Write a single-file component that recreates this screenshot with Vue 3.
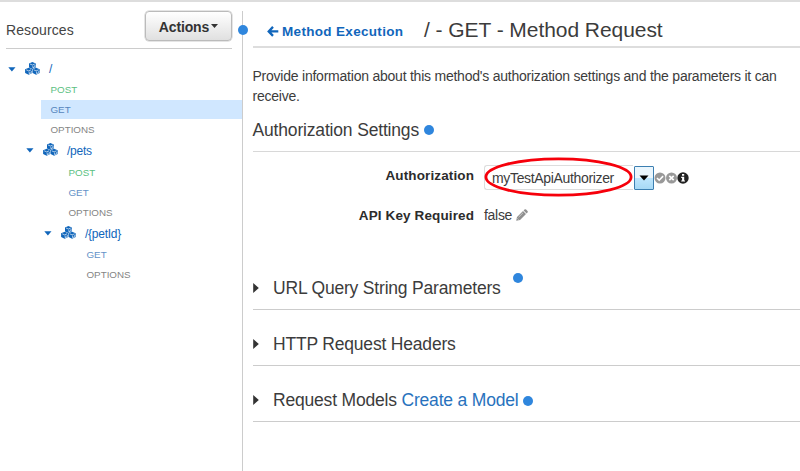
<script setup>
const tree = [
  { label: '/', depth: 0, height: 20, methods: ['POST', 'GET', 'OPTIONS'], selected: 'GET' },
  { label: '/pets', depth: 1, height: 23, methods: ['POST', 'GET', 'OPTIONS'] },
  { label: '/{petId}', depth: 2, height: 22, methods: ['GET', 'OPTIONS'] },
]
const sections = [
  { title: 'URL Query String Parameters', dot: 'raised' },
  { title: 'HTTP Request Headers' },
  { title: 'Request Models', link: 'Create a Model', dot: 'inline' },
]
</script>

<template>
  <div class="page">
    <aside class="sidebar">
      <header class="side-head">
        <span class="side-title">Resources</span>
        <button class="actions"><span>Actions</span><svg width="7" height="4" viewBox="0 0 7 4"><path d="M0 0h7L3.5 4z" fill="#333" /></svg></button>
      </header>
      <div v-for="node in tree" :key="node.label" class="node" :class="'depth' + node.depth">
        <div class="resource" :style="{ height: node.height + 'px' }">
          <svg class="caret" width="8" height="5" viewBox="0 0 8 5"><path d="M.3 .3h7.2L3.9 4.6z" fill="currentColor" /></svg>
          <svg class="cubes" width="15" height="13" viewBox="0 0 15 13">
            <g fill="currentColor">
              <path d="M7.4 0l3.4 1.4v4L7.4 6.9 4 5.4v-4z" />
              <path d="M3.7 5.7l3.5 1.5v3.8l-3.5 1.7L.1 11V7.2z" />
              <path d="M11.1 5.7l3.6 1.5V11l-3.6 1.7L7.6 11V7.2z" />
            </g>
            <g fill="none" stroke="#fff" stroke-width=".65">
              <path d="M5 2l2.4 1 2.4-1M7.9 3.8v2l2-.9V3.1" />
              <path d="M1.2 7.8l2.5 1.1 2.4-1.1M4.2 9.6v2.1l2.1-1V8.9" />
              <path d="M8.7 7.8l2.4 1.1 2.5-1.1M11.6 9.6v2.1l2.2-1V8.9" />
            </g>
          </svg>
          <span class="path">{{ node.label }}</span>
        </div>
        <div v-for="m in node.methods" :key="m" class="method" :class="[m.toLowerCase(), { selected: m === node.selected }]">
          <span>{{ m }}</span>
        </div>
      </div>
    </aside>

    <main class="content">
      <i class="dot divider-dot"></i>
      <header class="main-head">
        <a class="back">
          <svg width="12" height="11" viewBox="0 0 12 11"><path d="M6 .9L1.7 5.4 6 9.9M2 5.4h9.3" fill="none" stroke="currentColor" stroke-width="2.3" /></svg>
          <span>Method Execution</span>
        </a>
        <h1>/ - GET - Method Request</h1>
      </header>
      <p class="intro">Provide information about this method's authorization settings and the parameters it can<br>receive.</p>
      <h2 class="auth-title"><span>Authorization Settings</span><i class="dot"></i></h2>

      <div class="form-row auth-row">
        <label>Authorization</label>
        <div class="select">
          <span class="value">myTestApiAuthorizer</span>
          <svg class="ring" width="150" height="42" viewBox="0 0 150 42"><ellipse cx="74.5" cy="21" rx="72.6" ry="18.2" fill="none" stroke="#f6000b" stroke-width="2.8" /></svg>
        </div>
        <button class="drop"><svg width="10" height="6" viewBox="0 0 10 6"><path d="M.5 .5h9L5 5.5z" fill="#000" /></svg></button>
        <svg class="status" width="36" height="12" viewBox="0 0 36 12">
          <circle cx="6" cy="6" r="5.5" fill="#999" />
          <path d="M3 6l2.2 2.2L9.1 4.1" fill="none" stroke="#fff" stroke-width="1.6" />
          <circle cx="17.5" cy="6" r="5.5" fill="#999" />
          <path d="M15.3 3.8l4.4 4.4M19.7 3.8l-4.4 4.4" stroke="#fff" stroke-width="1.7" />
          <circle cx="29" cy="6" r="5.7" fill="#222" />
          <path d="M28 2h2.2v1.7H28zM27.2 4.8h3v3.6h.8v1.2h-3.8V8.4h.9V6h-.9z" fill="#fff" />
        </svg>
      </div>
      <div class="form-row key-row">
        <label>API Key Required</label>
        <span class="false">false</span>
        <svg class="pencil" width="12" height="12" viewBox="0 0 12 12">
          <path d="M.2 11.8l.8-3.8L7 2l3 3-6 6zM7.6 1.4L8.5.5q.8-.7 1.6 0l1.4 1.4q.7.8 0 1.6l-.9.9z" fill="#8f8f8f" />
          <path d="M2.6 8.2L7 3.8M1.4 9.4l1.2 1.2" stroke="#fff" stroke-width=".5" />
        </svg>
      </div>

      <section v-for="s in sections" :key="s.title" class="fold">
        <svg class="tri" width="6" height="10" viewBox="0 0 6 10"><path d="M.2 0v10L5.8 5z" fill="#333" /></svg>
        <h2>{{ s.title }} <a v-if="s.link">{{ s.link }}</a></h2>
        <i v-if="s.dot" class="dot" :class="s.dot"></i>
      </section>
    </main>
  </div>
</template>

<style>
body { margin: 0; background: #fff; }
</style>

<style scoped>
* { box-sizing: border-box; }
.page {
  display: flex; width: 800px; height: 471px; overflow: hidden;
  border-top: 2px solid #ddd; background: #fff; color: #3c3c3c;
  font-family: "Liberation Sans", Arial, sans-serif; font-size: 14px;
}
svg { display: block; flex: none; }
h1, h2, p { margin: 0; font-weight: 400; }
button { font-family: inherit; padding: 0; }
.sidebar { width: 242px; flex: none; }
.side-head {
  display: flex; align-items: flex-start; justify-content: space-between;
  height: 47px; margin: 0 10px 10px 6px; padding-top: 9px; border-bottom: 1px solid #ccc;
}
.side-title { line-height: 20px; padding-top: 9px; letter-spacing: .1px; color: #444; }
.actions {
  display: flex; align-items: center; justify-content: center; gap: 2px;
  width: 87px; height: 30px; border: 1px solid #bbb; border-radius: 4px;
  background: linear-gradient(#fff, #e0e0e0); box-shadow: 0 0 0 .5px #ccc;
  color: #333; font-size: 14px; font-weight: 700; letter-spacing: -.15px;
}
.actions span { margin-top: 1px; }
.depth0 { padding-left: 8px; }
.depth1 { padding-left: 26px; }
.depth2 { padding-left: 44px; }
.resource { display: flex; align-items: center; color: #1166bb; font-size: 12px; }
.caret { margin-right: 9px; }
.cubes { margin: -2px 9px 0 0; }
.path { line-height: 16px; letter-spacing: -.25px; }
.depth2 .path { margin-top: 1px; }
.method {
  height: 20px; margin-left: 33px; padding: 1px 0 0 9.5px; line-height: 19px;
  font-size: 9.8px; color: #858585;
}
.post { color: #5cbf82; }
.get { color: #6492c8; }
.method.selected { background: linear-gradient(transparent 1px, #d0e7ff 1px); color: #5585bd; }

.content {
  position: relative; flex: 1; margin-top: 9px; padding-left: 9.5px; border-left: 1px solid #ccc;
}
.dot { display: block; flex: none; width: 10px; height: 10px; border-radius: 50%; background: #2f86dd; }
.divider-dot { position: absolute; left: -5px; top: 14px; }
.main-head {
  display: flex; height: 37px; padding-left: 14.5px; border-bottom: 2px solid #ddd;
}
.back {
  display: flex; align-items: center; gap: 3px; width: 157px; height: 40px;
  color: #1166bb; font-size: 13.5px; font-weight: 700; letter-spacing: .32px; white-space: nowrap;
}
h1 { font-size: 21px; line-height: 24px; padding-top: 7px; letter-spacing: -.06px; white-space: nowrap; }
.intro { padding-top: 18px; line-height: 20px; letter-spacing: -.23px; white-space: nowrap; }
.auth-title {
  display: flex; align-items: center; gap: 4.5px; height: 46px; padding-top: 3px;
  border-bottom: 1px solid #d8d8d8; font-size: 17.5px; letter-spacing: -.17px;
}
.form-row { display: flex; }
.form-row label {
  width: 221.5px; padding-top: 1px; text-align: right; font-size: 13.5px; font-weight: 700;
  line-height: 20px; letter-spacing: .12px; color: #2c2c2c; white-space: nowrap;
}
.auth-row { padding-top: 13px; height: 53px; }
.select {
  position: relative; width: 149px; height: 25px; margin-left: 10px; padding-left: 7px;
  border: 1px solid #ddd; border-right: 0; border-radius: 3px 0 0 3px;
  line-height: 24px; letter-spacing: -.34px;
}
.ring { position: absolute; left: -1px; top: -10px; }
.drop {
  display: flex; align-items: center; justify-content: center;
  width: 20px; height: 24px; margin: 1px 0 0 1px; border: 1px solid #3c7fb1; border-radius: 1px;
  background: linear-gradient(#eaf6fd 48%, #bee6fd 52%, #a7d9f5);
}
.status { margin: 7px 0 0 0; }
.key-row { height: 49px; }
.false { margin-left: 10px; line-height: 20px; letter-spacing: -.3px; }
.pencil { margin: 4px 0 0 4px; }
.fold {
  display: flex; align-items: center; height: 56px; padding-top: 13px; border-bottom: 1px solid #ccc;
}
.tri { margin-right: 14.5px; }
.fold h2 { font-size: 17.5px; letter-spacing: -.19px; white-space: nowrap; }
.fold a { color: #2872bd; }
.inline { margin: 2px 0 0 4.5px; }
.raised { margin: -20px 0 0 12.5px; }
</style>
